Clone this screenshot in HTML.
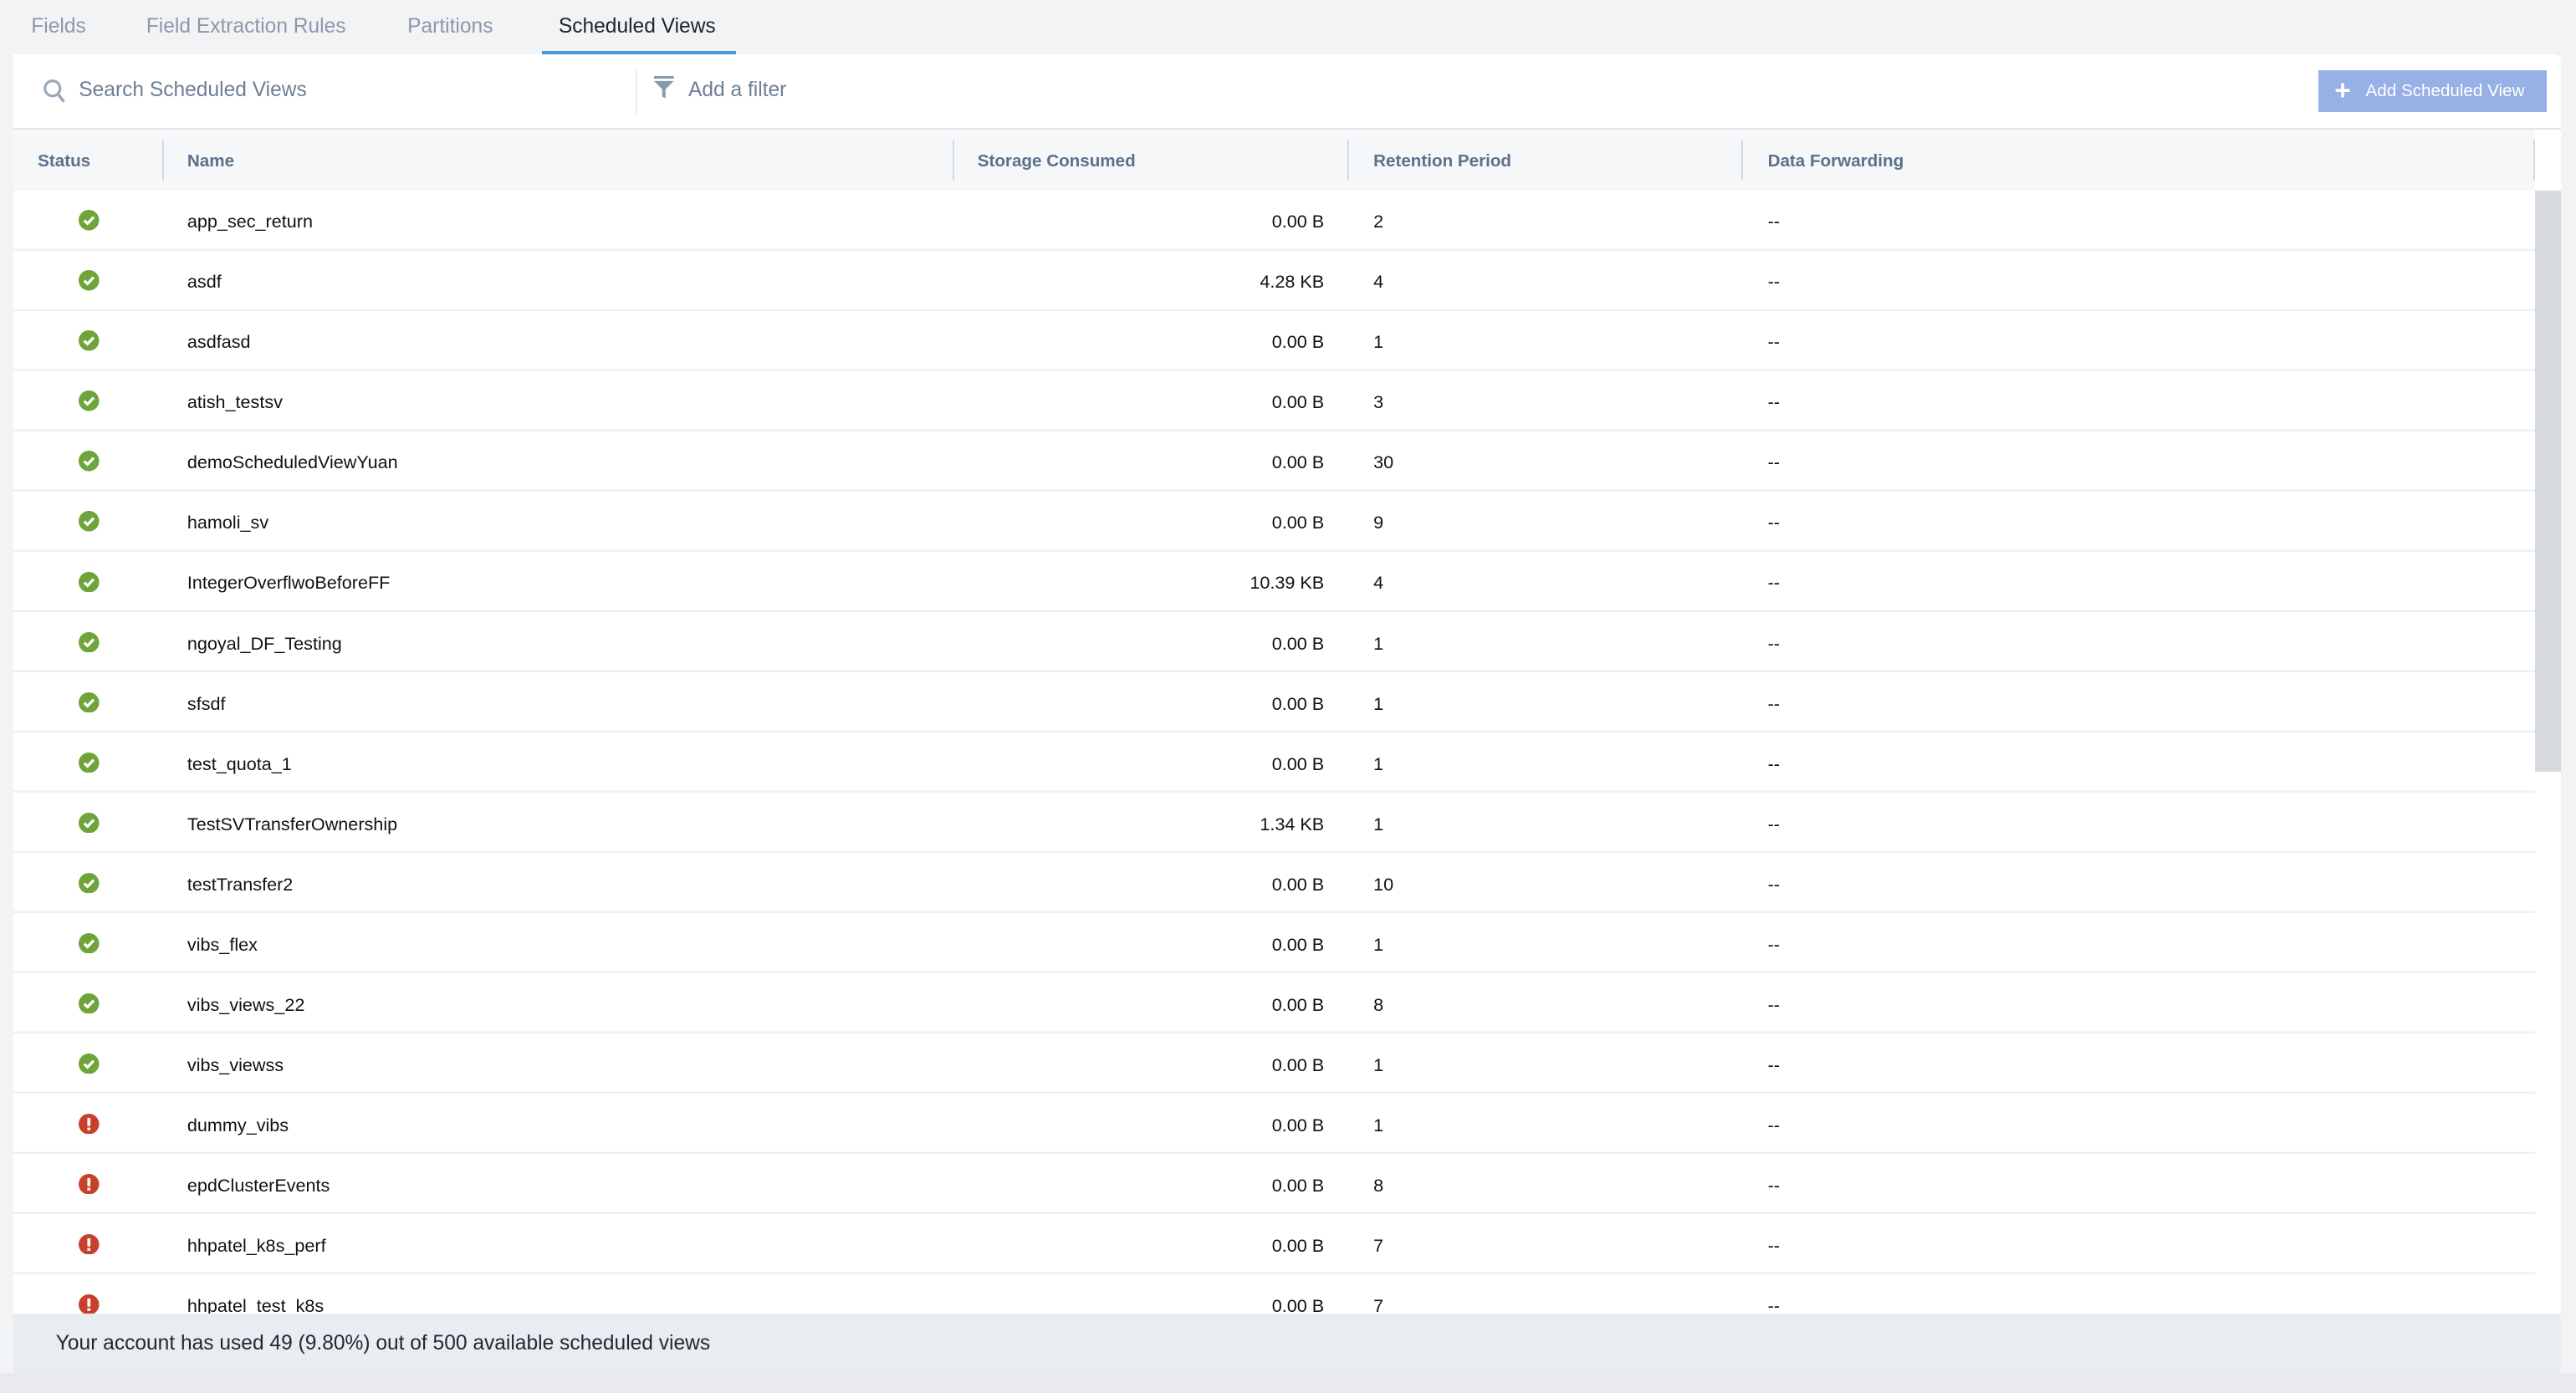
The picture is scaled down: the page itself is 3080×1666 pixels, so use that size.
<!DOCTYPE html>
<html><head><meta charset="utf-8"><style>
html,body{margin:0;padding:0;}
body{width:1568px;height:847.2px;zoom:1.96429;background:#f2f3f5;font-family:"Liberation Sans",sans-serif;position:relative;overflow:hidden;}
.tab{position:absolute;top:9px;font-size:12.5px;color:#8a99ab;}
.tab.act{color:#1c2430;}
.ul{position:absolute;left:330px;top:31px;width:118px;height:2.5px;background:#4a9ad8;}
.panel{position:absolute;left:8px;top:33px;width:1551px;height:803px;background:#fff;overflow:hidden;border-radius:0 4px 0 0;}
.tool{position:absolute;left:0;top:0;width:1551px;height:45px;border-bottom:1.5px solid #e2e6ea;}
.search{position:absolute;left:40px;top:15px;font-size:12.5px;color:#6c7f94;}
.vsep{position:absolute;left:379px;top:10px;width:1px;height:26px;background:#e6e9ed;}
.filt{position:absolute;left:411px;top:15px;font-size:12.5px;color:#6c7f94;}
.btn{position:absolute;left:1403px;top:10px;width:139px;height:25px;background:#97b0e6;color:#fff;font-size:10.5px;line-height:25px;}
.head{position:absolute;left:0;top:46px;width:1535px;height:37px;background:#f6f7f9;}
.hc{position:absolute;top:13px;font-size:10.5px;font-weight:bold;color:#5b708a;}
.hd{position:absolute;top:6px;width:1px;height:25px;background:#d3dae2;}
.rows{position:absolute;left:0;top:83px;width:1535px;}
.row{position:relative;height:36.67px;background:linear-gradient(to top,#edf0f3 0,#edf0f3 1.2px,#fff 1.2px);font-size:11px;color:#111;}
.row span{position:absolute;top:12.5px;}
.ic{position:absolute;left:40px;top:12px;width:12.5px;height:12.5px;}
.nm{left:106px;}
.st{right:737px;}
.rp{left:828px;}
.df{left:1068px;}
.sb{position:absolute;left:1535px;top:83px;width:16px;height:720px;background:#fff;}
.thumb{position:absolute;left:1535px;top:83px;width:16px;height:354px;background:#d6d9de;}
.foot{position:absolute;left:8px;top:800px;width:1551px;height:36px;background:#e9ecf0;font-size:12.5px;color:#1e2835;}
.foot span{position:absolute;left:26px;top:11px;}
.bot{position:absolute;left:0;top:836px;width:1568px;height:12px;background:#e8eaed;}
</style></head><body>
<div class="tab" style="left:19px">Fields</div>
<div class="tab" style="left:89px">Field Extraction Rules</div>
<div class="tab" style="left:248px">Partitions</div>
<div class="tab act" style="left:340px">Scheduled Views</div>
<div class="ul"></div>
<div class="panel">
 <div class="tool">
  <svg style="position:absolute;left:18px;top:15px" width="14" height="15" viewBox="0 0 14 15"><circle cx="6" cy="6" r="4.6" fill="none" stroke="#9aa8b8" stroke-width="1.6"/><path d="M9.3 9.5L12.5 13.5" stroke="#9aa8b8" stroke-width="1.8" stroke-linecap="round"/></svg>
  <div class="search">Search Scheduled Views</div>
  <div class="vsep"></div>
  <svg style="position:absolute;left:389px;top:13px" width="14" height="15" viewBox="0 0 14 15"><rect x="1" y="0.5" width="12" height="1.6" fill="#8a99ab"/><path d="M1 3.5H13L8 8.5V14L6 13V8.5Z" fill="#8a99ab"/></svg>
  <div class="filt">Add a filter</div>
  <div class="btn"><span style="position:absolute;left:10px;top:0;font-size:17px;font-weight:bold">+</span><span style="position:absolute;left:29px">Add Scheduled View</span></div>
 </div>
 <div class="head">
  <div class="hc" style="left:15px">Status</div><div class="hd" style="left:91px"></div>
  <div class="hc" style="left:106px">Name</div><div class="hd" style="left:572px"></div>
  <div class="hc" style="left:587px">Storage Consumed</div><div class="hd" style="left:812px"></div>
  <div class="hc" style="left:828px">Retention Period</div><div class="hd" style="left:1052px"></div>
  <div class="hc" style="left:1068px">Data Forwarding</div><div class="hd" style="left:1534px"></div>
 </div>
 <div class="rows">
 <div class="row"><svg class="ic" viewBox="0 0 12 12"><circle cx="6" cy="6" r="6" fill="#6ea43a"/><path d="M3.3 6.2L5.2 8L8.8 4.2" fill="none" stroke="#fff" stroke-width="1.6"/></svg><span class="nm">app_sec_return</span><span class="st">0.00 B</span><span class="rp">2</span><span class="df">--</span></div>
 <div class="row"><svg class="ic" viewBox="0 0 12 12"><circle cx="6" cy="6" r="6" fill="#6ea43a"/><path d="M3.3 6.2L5.2 8L8.8 4.2" fill="none" stroke="#fff" stroke-width="1.6"/></svg><span class="nm">asdf</span><span class="st">4.28 KB</span><span class="rp">4</span><span class="df">--</span></div>
 <div class="row"><svg class="ic" viewBox="0 0 12 12"><circle cx="6" cy="6" r="6" fill="#6ea43a"/><path d="M3.3 6.2L5.2 8L8.8 4.2" fill="none" stroke="#fff" stroke-width="1.6"/></svg><span class="nm">asdfasd</span><span class="st">0.00 B</span><span class="rp">1</span><span class="df">--</span></div>
 <div class="row"><svg class="ic" viewBox="0 0 12 12"><circle cx="6" cy="6" r="6" fill="#6ea43a"/><path d="M3.3 6.2L5.2 8L8.8 4.2" fill="none" stroke="#fff" stroke-width="1.6"/></svg><span class="nm">atish_testsv</span><span class="st">0.00 B</span><span class="rp">3</span><span class="df">--</span></div>
 <div class="row"><svg class="ic" viewBox="0 0 12 12"><circle cx="6" cy="6" r="6" fill="#6ea43a"/><path d="M3.3 6.2L5.2 8L8.8 4.2" fill="none" stroke="#fff" stroke-width="1.6"/></svg><span class="nm">demoScheduledViewYuan</span><span class="st">0.00 B</span><span class="rp">30</span><span class="df">--</span></div>
 <div class="row"><svg class="ic" viewBox="0 0 12 12"><circle cx="6" cy="6" r="6" fill="#6ea43a"/><path d="M3.3 6.2L5.2 8L8.8 4.2" fill="none" stroke="#fff" stroke-width="1.6"/></svg><span class="nm">hamoli_sv</span><span class="st">0.00 B</span><span class="rp">9</span><span class="df">--</span></div>
 <div class="row"><svg class="ic" viewBox="0 0 12 12"><circle cx="6" cy="6" r="6" fill="#6ea43a"/><path d="M3.3 6.2L5.2 8L8.8 4.2" fill="none" stroke="#fff" stroke-width="1.6"/></svg><span class="nm">IntegerOverflwoBeforeFF</span><span class="st">10.39 KB</span><span class="rp">4</span><span class="df">--</span></div>
 <div class="row"><svg class="ic" viewBox="0 0 12 12"><circle cx="6" cy="6" r="6" fill="#6ea43a"/><path d="M3.3 6.2L5.2 8L8.8 4.2" fill="none" stroke="#fff" stroke-width="1.6"/></svg><span class="nm">ngoyal_DF_Testing</span><span class="st">0.00 B</span><span class="rp">1</span><span class="df">--</span></div>
 <div class="row"><svg class="ic" viewBox="0 0 12 12"><circle cx="6" cy="6" r="6" fill="#6ea43a"/><path d="M3.3 6.2L5.2 8L8.8 4.2" fill="none" stroke="#fff" stroke-width="1.6"/></svg><span class="nm">sfsdf</span><span class="st">0.00 B</span><span class="rp">1</span><span class="df">--</span></div>
 <div class="row"><svg class="ic" viewBox="0 0 12 12"><circle cx="6" cy="6" r="6" fill="#6ea43a"/><path d="M3.3 6.2L5.2 8L8.8 4.2" fill="none" stroke="#fff" stroke-width="1.6"/></svg><span class="nm">test_quota_1</span><span class="st">0.00 B</span><span class="rp">1</span><span class="df">--</span></div>
 <div class="row"><svg class="ic" viewBox="0 0 12 12"><circle cx="6" cy="6" r="6" fill="#6ea43a"/><path d="M3.3 6.2L5.2 8L8.8 4.2" fill="none" stroke="#fff" stroke-width="1.6"/></svg><span class="nm">TestSVTransferOwnership</span><span class="st">1.34 KB</span><span class="rp">1</span><span class="df">--</span></div>
 <div class="row"><svg class="ic" viewBox="0 0 12 12"><circle cx="6" cy="6" r="6" fill="#6ea43a"/><path d="M3.3 6.2L5.2 8L8.8 4.2" fill="none" stroke="#fff" stroke-width="1.6"/></svg><span class="nm">testTransfer2</span><span class="st">0.00 B</span><span class="rp">10</span><span class="df">--</span></div>
 <div class="row"><svg class="ic" viewBox="0 0 12 12"><circle cx="6" cy="6" r="6" fill="#6ea43a"/><path d="M3.3 6.2L5.2 8L8.8 4.2" fill="none" stroke="#fff" stroke-width="1.6"/></svg><span class="nm">vibs_flex</span><span class="st">0.00 B</span><span class="rp">1</span><span class="df">--</span></div>
 <div class="row"><svg class="ic" viewBox="0 0 12 12"><circle cx="6" cy="6" r="6" fill="#6ea43a"/><path d="M3.3 6.2L5.2 8L8.8 4.2" fill="none" stroke="#fff" stroke-width="1.6"/></svg><span class="nm">vibs_views_22</span><span class="st">0.00 B</span><span class="rp">8</span><span class="df">--</span></div>
 <div class="row"><svg class="ic" viewBox="0 0 12 12"><circle cx="6" cy="6" r="6" fill="#6ea43a"/><path d="M3.3 6.2L5.2 8L8.8 4.2" fill="none" stroke="#fff" stroke-width="1.6"/></svg><span class="nm">vibs_viewss</span><span class="st">0.00 B</span><span class="rp">1</span><span class="df">--</span></div>
 <div class="row"><svg class="ic" viewBox="0 0 12 12"><circle cx="6" cy="6" r="6" fill="#c9402a"/><rect x="5.1" y="2.4" width="1.8" height="4.8" rx="0.5" fill="#fff"/><rect x="5.1" y="8.1" width="1.8" height="1.6" fill="#fff"/></svg><span class="nm">dummy_vibs</span><span class="st">0.00 B</span><span class="rp">1</span><span class="df">--</span></div>
 <div class="row"><svg class="ic" viewBox="0 0 12 12"><circle cx="6" cy="6" r="6" fill="#c9402a"/><rect x="5.1" y="2.4" width="1.8" height="4.8" rx="0.5" fill="#fff"/><rect x="5.1" y="8.1" width="1.8" height="1.6" fill="#fff"/></svg><span class="nm">epdClusterEvents</span><span class="st">0.00 B</span><span class="rp">8</span><span class="df">--</span></div>
 <div class="row"><svg class="ic" viewBox="0 0 12 12"><circle cx="6" cy="6" r="6" fill="#c9402a"/><rect x="5.1" y="2.4" width="1.8" height="4.8" rx="0.5" fill="#fff"/><rect x="5.1" y="8.1" width="1.8" height="1.6" fill="#fff"/></svg><span class="nm">hhpatel_k8s_perf</span><span class="st">0.00 B</span><span class="rp">7</span><span class="df">--</span></div>
 <div class="row"><svg class="ic" viewBox="0 0 12 12"><circle cx="6" cy="6" r="6" fill="#c9402a"/><rect x="5.1" y="2.4" width="1.8" height="4.8" rx="0.5" fill="#fff"/><rect x="5.1" y="8.1" width="1.8" height="1.6" fill="#fff"/></svg><span class="nm">hhpatel_test_k8s</span><span class="st">0.00 B</span><span class="rp">7</span><span class="df">--</span></div>
 <div class="row"></div>
 </div>
 <div class="sb"></div><div class="thumb"></div>
</div>
<div class="foot"><span>Your account has used 49 (9.80%) out of 500 available scheduled views</span></div>
<div class="bot"></div>
</body></html>
